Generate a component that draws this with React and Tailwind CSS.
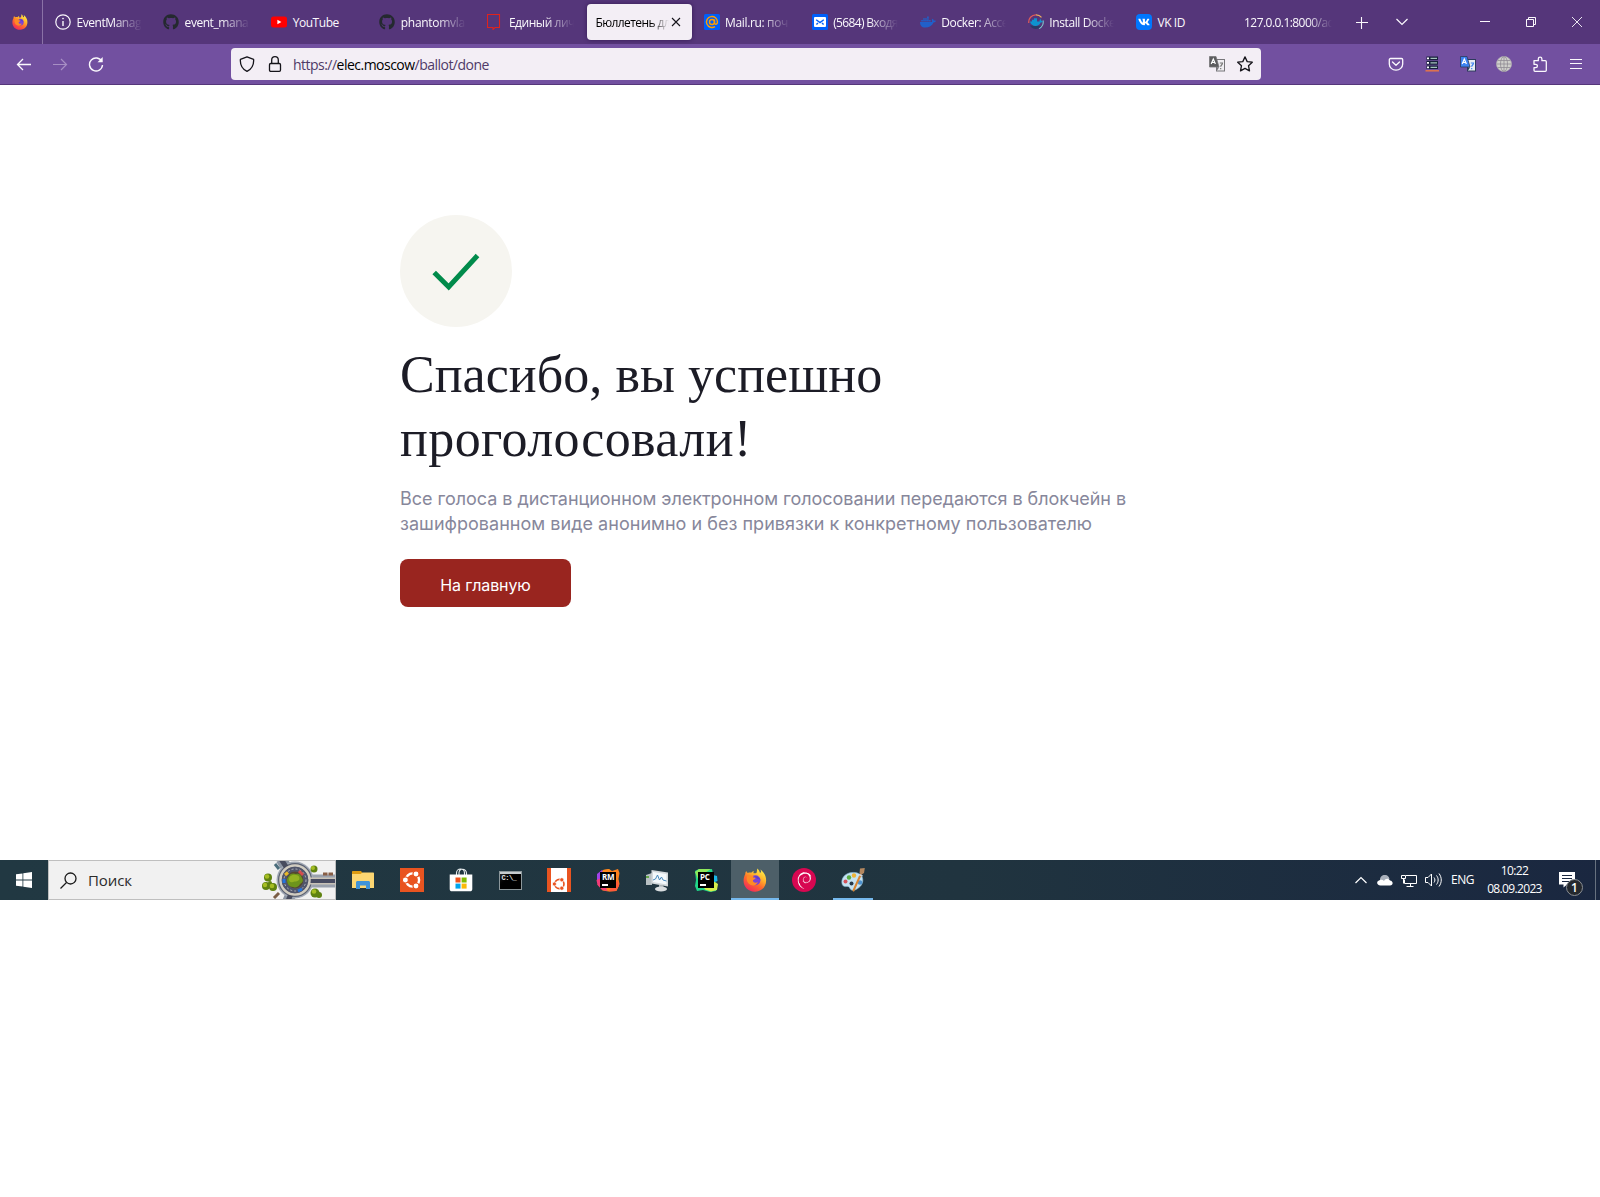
import React from "react";
import { FaGithub, FaDocker, FaVk } from "react-icons/fa";
import { SiDebian } from "react-icons/si";

function Firefox({ size, id }) {
  return (
    <svg width={size} height={size} viewBox="0 0 24 24">
      <defs>
        <linearGradient id={id} x1="0.85" y1="0.05" x2="0.25" y2="1">
          <stop offset="0" stopColor="#fff14a" />
          <stop offset="0.35" stopColor="#ffb02a" />
          <stop offset="0.6" stopColor="#ff6a2c" />
          <stop offset="1" stopColor="#f0245f" />
        </linearGradient>
      </defs>
      <path
        fill={`url(#${id})`}
        d="M14.5 0.5c1 1.2 2 2.4 2.4 4.2l1.2-0.4c0-1.2-.3-2-.7-2.8 2 1.300 4 4 5 6.500 2.600 8-2 15.500-10 15.700C5 24 .2 18.400.6 12c.1-2.600.9-4.300 1.600-5.700 0-1.200.3-2.300 1-3.300.4 1 1 1.600 1.700 2 1-.5 2.300-.6 3.300-.3 1-1 2-1.500 2.800-1.600-.5.8-.6 1.500-.4 2.200 1.500.2 2.700 0 3-.9.600-1.400.2-2.700.9-3.900z"
      />
      <circle cx="12.400" cy="12.200" r="5" fill="#7a42d8" />
      <path fill="#5a3fd0" d="M11 8.500c3-1 6 .6 6.600 4-.6-1-1.600-1.700-3-1.500z" />
      <path
        fill="#ff8a26"
        d="M4 8.500c1-1.500 3.500-1.700 5-.7.6-.4 1.600-.5 2.400-.2-.9.500-1.400 1.200-1.400 1.900l2.500.3c.1 1.200-1.300 1.700-2.300 2.200-.5.700-.2 1.500.4 2.100 1.300 1.100 3.400.6 4.400-.4-1 3.100-4.200 4.600-7.200 3.300C4.500 15.500 3 12 4 8.500z"
      />
    </svg>
  );
}

function InfoIcon() {
  return (
    <svg width="16" height="16" viewBox="0 0 16 16" fill="none" stroke="#fbf9fd">
      <circle cx="8" cy="8" r="7.200" strokeWidth="1.200" />
      <path d="M8 7v5" strokeWidth="1.400" />
      <circle cx="8" cy="4.600" r=".5" />
    </svg>
  );
}

function YouTubeIcon() {
  return (
    <svg width="16" height="16" viewBox="0 0 16 16">
      <rect y="2.500" width="16" height="11" rx="2.500" fill="#f00" />
      <path d="M6.400 5.700v4.600l4-2.300z" fill="#fff" />
    </svg>
  );
}

function BubbleIcon() {
  return (
    <svg width="16" height="16" viewBox="0 0 16 16" fill="none" stroke="#e0231c">
      <path d="M.5.500h12v13H8L6 15.500v-2H.5z" strokeWidth="1.100" />
    </svg>
  );
}

function MailAtIcon() {
  return (
    <svg width="16" height="16" viewBox="0 0 16 16" fill="none" stroke="#ff9e00" strokeWidth="1.400">
      <rect width="16" height="16" rx="1.500" fill="#005ff9" stroke="none" />
      <circle cx="8" cy="8" r="2.500" />
      <path d="M10.500 5.500v3.200c0 2.200 3 2 3-.7A5.500 5.500 0 1 0 11 12.600" />
    </svg>
  );
}

function EnvelopeIcon() {
  return (
    <svg width="16" height="16" viewBox="0 0 16 16">
      <rect width="16" height="16" rx="1.500" fill="#005ff9" />
      <rect x="2" y="3" width="12" height="10" rx="1" fill="#fff" />
      <path d="M4.200 5.800L8 8.600l3.800-2.800M4.400 10.600l1.600-1.600M11.600 10.600L10 9" fill="none" stroke="#005ff9" strokeWidth="1.400" />
    </svg>
  );
}

function DockerDocsIcon() {
  return (
    <svg width="16" height="16" viewBox="0 0 16 16" fill="none">
      <path d="M.8 9A7.200 7.200 0 0 1 8 .8" stroke="#e25b58" strokeWidth="1.200" />
      <path d="M8 .8a7 7 0 0 1 5.500 2.600" stroke="#f0b060" strokeWidth="1.200" />
      <path d="M15 6.500A7 7 0 0 1 11 14.500" stroke="#7fc5cc" strokeWidth="1.200" />
      <path d="M2 11.500c2 4.500 9 4.500 11 .5z" fill="#2b3a66" />
      <path d="M2 7.500h2v-1.700h2V4.200h3v3.300h2.500c0-1.200.3-2 .9-2.500.7.600 1 1.200 1 2 .6-.1 1 0 1.400.2-.4 1-1.300 1.300-2.200 1.300C11.500 13 3 13.500 2 7.500z" fill="#0e93cf" />
    </svg>
  );
}

function VkIcon() {
  return (
    <span className="flex size-4 items-center justify-center rounded-[4px] bg-[#0077ff] text-white">
      <FaVk size={12} />
    </span>
  );
}

const tabs = [
  { label: "EventManag", icon: <InfoIcon />, spacing: "tracking-[-0.45px]" },
  { label: "event_mana", icon: <FaGithub size={16} color="#24292f" />, spacing: "tracking-[-0.45px]" },
  { label: "YouTube", icon: <YouTubeIcon />, spacing: "tracking-[-0.45px]", full: true },
  { label: "phantomvla", icon: <FaGithub size={16} color="#24292f" />, spacing: "tracking-[-0.3px]" },
  { label: "Единый лич", icon: <BubbleIcon />, spacing: "tracking-[-0.45px]" },
  { label: "Бюллетень дл", active: true, spacing: "tracking-[-0.6px]" },
  { label: "Mail.ru: поч", icon: <MailAtIcon />, spacing: "tracking-[-0.35px]" },
  { label: "(5684) Входя", icon: <EnvelopeIcon />, spacing: "tracking-[-0.65px]" },
  { label: "Docker: Acce", icon: <FaDocker size={16} color="#2160c9" />, spacing: "tracking-[-0.4px]" },
  { label: "Install Docke", icon: <DockerDocsIcon />, spacing: "tracking-[-0.4px]" },
  { label: "VK ID", icon: <VkIcon />, spacing: "tracking-[-0.4px]", full: true },
  { label: "127.0.0.1:8000/ad", spacing: "tracking-[-0.55px]" },
];

function Tab({ tab }) {
  if (tab.active) {
    return (
      <div className="mr-[3.100px] flex h-9 w-[105px] shrink-0 items-center rounded bg-[#f3eef5] pl-2 text-black shadow-[0_0_4px_rgba(30,10,60,0.6)]">
        <span className={`w-[74px] pt-[2px] whitespace-nowrap [mask-image:linear-gradient(to_right,black_76%,transparent)] ${tab.spacing}`}>
          {tab.label}
        </span>
        <svg width="10" height="10" viewBox="0 0 10 10" className="ml-[2px]" stroke="#15141a" strokeWidth="1.100">
          <path d="M1 1l8 8M9 1L1 9" />
        </svg>
      </div>
    );
  }
  const fade = tab.full
    ? ""
    : tab.icon
      ? "w-[65px] [mask-image:linear-gradient(to_right,black_55%,transparent)]"
      : "w-[88px] [mask-image:linear-gradient(to_right,black_72%,transparent)]";
  return (
    <div className="flex h-9 w-[108.100px] shrink-0 items-center pl-2">
      {tab.icon && <span className="mr-[5.500px] size-4 shrink-0">{tab.icon}</span>}
      <span className={`pt-[2px] whitespace-nowrap ${fade} ${tab.spacing}`}>{tab.label}</span>
    </div>
  );
}

function TabBar() {
  return (
    <div className="flex h-11 items-center bg-[#55367a] text-[12px] text-[#fbf9fd]">
      <div className="flex h-full w-[43px] items-center border-r border-[#8a72a6] pl-3">
        <Firefox size={16} id="fxSmall" />
      </div>
      <div className="flex w-[1302px] pl-1">
        {tabs.map((tab) => (
          <Tab key={tab.label} tab={tab} />
        ))}
      </div>
      <div className="flex w-[117px] items-center pl-[11px]">
        <svg width="12" height="12" viewBox="0 0 12 12" stroke="currentColor" className="mt-px">
          <path d="M5.500 0v12M0 5.500h12" strokeWidth="1.100" />
        </svg>
        <svg width="12" height="8" viewBox="0 0 12 8" fill="none" stroke="currentColor" strokeWidth="1.200" className="ml-[28px]">
          <path d="M.5 1L6 6.500 11.500 1" />
        </svg>
      </div>
      <div className="grid grid-cols-3 [&>svg]:mx-[18px]">
        <svg width="10" height="10" viewBox="0 0 10 10" stroke="currentColor">
          <path d="M0 4.500h10" />
        </svg>
        <svg width="10" height="10" viewBox="0 0 10 10" fill="none" stroke="currentColor">
          <path d="M.5 2.500h7v7h-7zM2.500 2.500v-2h7v7h-2" />
        </svg>
        <svg width="10" height="10" viewBox="0 0 10 10" stroke="currentColor" strokeWidth=".9">
          <path d="M0 0l10 10M10 0L0 10" />
        </svg>
      </div>
    </div>
  );
}

function TranslateIcon({ back, front, ink, edge }) {
  return (
    <svg width="16" height="16" viewBox="0 0 16 16">
      <rect x="7.500" y="3.500" width="8" height="11.500" fill={front} stroke={edge} />
      <path d="M10.800 7h2.700c0 2-1.800 2-1.800 3.800M11.700 12v1.200" stroke={ink} fill="none" strokeWidth="1.200" />
      <path d="M.5.500h6.500l3 10.500H.5z" fill={back} stroke={edge} strokeWidth=".8" />
      <path d="M2.200 8L4.300 3 6.400 8M3 6.500h2.700" stroke="#fff" fill="none" strokeWidth="1.200" />
      <path d="M7 11.200h3l-1.500 3z" fill={edge} />
    </svg>
  );
}

function ToolBar() {
  return (
    <div className="flex h-[41px] items-start border-b border-[#55367a] bg-[#7250a0] pt-1 text-[#fbf9fd]">
      <div className="flex h-8 w-[231px] items-center gap-[21px] pl-4">
        <svg width="16" height="16" viewBox="0 0 16 16" fill="none" stroke="currentColor" strokeWidth="1.300">
          <path d="M15 8.500H1.500M7 3L1.500 8.500 7 14" />
        </svg>
        <svg width="16" height="16" viewBox="0 0 16 16" fill="none" stroke="#a78fc4" strokeWidth="1.200" className="ml-[-1px]">
          <path d="M1 8.500h13.500M9 3l5.500 5.500L9 14" />
        </svg>
        <svg width="16" height="16" viewBox="0 0 16 16" fill="none" stroke="currentColor" strokeWidth="1.400" className="ml-[-1px]">
          <path d="M13.800 5.500A6.500 6.500 0 1 0 14.500 9" />
          <path d="M14.700 1v5.300H9.500z" fill="currentColor" stroke="none" />
        </svg>
      </div>
      <div className="flex h-8 w-[1030px] items-center rounded bg-[#f3eef5] px-2 text-[14px] text-[#15141a]">
        <svg width="16" height="16" viewBox="0 0 16 16" fill="none" stroke="currentColor" strokeWidth="1.300" className="mr-3">
          <path d="M8 .8l6.600 2.500c.4 5-2 9.700-6.600 12.100C3.400 13 1 8.300 1.400 3.300z" strokeLinejoin="round" />
        </svg>
        <svg width="16" height="16" viewBox="0 0 16 16" fill="none" stroke="currentColor" strokeWidth="1.300">
          <rect x="2.500" y="7.500" width="11" height="7.800" rx="1.200" />
          <path d="M4.700 7.500V4a3.300 3.300 0 0 1 6.600 0v3.500" />
        </svg>
        <span className="ml-2.5 grow pt-px tracking-[-0.52px] text-[#4f3a68]">
          https://<span className="text-black">elec.moscow</span>/ballot/done
        </span>
        <TranslateIcon back="#5c5c5e" front="#f0eef2" ink="#777" edge="#77767a" />
        <svg width="16" height="16" viewBox="0 0 16 16" fill="none" stroke="currentColor" strokeWidth="1.300" strokeLinejoin="round" className="ml-3">
          <path d="M8 .9l2.200 4.700 5.100.6-3.800 3.500 1 5.200L8 12.400l-4.500 2.500 1-5.200L.7 6.200l5.100-.6z" />
        </svg>
      </div>
      <div className="ml-auto flex h-8 items-center gap-5 pr-4">
        <svg width="16" height="16" viewBox="0 0 16 16" fill="none" stroke="currentColor" strokeWidth="1.300">
          <path d="M2.500 2.500h11c.7 0 1.200.5 1.200 1.200V8a6.700 6.200 0 0 1-13.400 0V3.700c0-.7.500-1.200 1.200-1.200zM4.500 6L8 9.300 11.500 6" strokeLinejoin="round" strokeLinecap="round" />
        </svg>
        <svg width="16" height="16" viewBox="0 0 16 16">
          <path d="M2.500.500h11.500v3.700H2.500zM2.500 5h11.500v3.700H2.500zM2.500 9.500h11.500v3.600H2.500z" fill="#18203c" />
          <path d="M6.500 2.300h6.500M6.500 6.800h6.500M6.500 11.300h6.500" stroke="#a5c4bd" strokeWidth="1.200" />
          <path d="M3 2.300h2M3 6.800h2M3 11.300h2" stroke="#fff" strokeWidth="1.700" />
          <path d="M1.500 14.800h13.500" stroke="#e2734b" strokeWidth="1.500" />
        </svg>
        <TranslateIcon back="#3b82f0" front="#e8edf2" ink="#3b82f0" edge="#2c3a5c" />
        <svg width="16" height="16" viewBox="0 0 16 16" fill="none" stroke="#908c94" strokeWidth=".8">
          <circle cx="8" cy="8" r="7.500" fill="#d0d0cc" stroke="#b5b3b5" />
          <ellipse cx="8" cy="8" rx="3.500" ry="7.500" />
          <path d="M8 .5v15M.5 8h15M1.600 4.500h12.800M1.600 11.500h12.800" />
        </svg>
        <svg width="16" height="16" viewBox="0 0 16 16" fill="none" stroke="currentColor" strokeWidth="1.300" strokeLinejoin="round">
          <path d="M2 4.700h4.300V3a1.800 1.800 0 0 1 3.600 0v1.700h3.400c.6 0 1 .4 1 1v8.600c0 .6-.4 1-1 1H3c-.6 0-1-.4-1-1v-2.600h1.700a1.600 1.600 0 0 0 0-3.400H2z" />
        </svg>
        <svg width="16" height="16" viewBox="0 0 16 16" stroke="currentColor" strokeWidth="1.200">
          <path d="M2 3.500h12M2 7.500h12M2 12.500h12" />
        </svg>
      </div>
    </div>
  );
}

function Page() {
  return (
    <main className="h-[775px] pl-[400px] pt-[130px]">
      <div className="flex size-28 items-center justify-center rounded-full bg-[#f6f5f0]">
        <svg width="48" height="40" viewBox="0 0 48 40" fill="none" stroke="#018b4b" strokeWidth="5" className="mt-[2px]">
          <path d="M2.200 20.500L16.700 35 45.500 3.500" />
        </svg>
      </div>
      <h1 className="mt-[16px] w-[700px] font-['Liberation_Serif',serif] text-[52px] leading-[64px] text-[#1c1c26]">
        <span className="block tracking-[0.05px]">Спасибо, вы успешно</span>
        <span className="block tracking-[0.4px]">проголосовали!</span>
      </h1>
      <p className="mt-[15px] whitespace-nowrap font-['Inter',sans-serif] text-[18px] leading-[25px] text-[#87879b]">
        <span className="block tracking-[-0.045px]">Все голоса в дистанционном электронном голосовании передаются в блокчейн в</span>
        <span className="block tracking-[0.025px]">зашифрованном виде анонимно и без привязки к конкретному пользователю</span>
      </p>
      <button className="mt-[23px] flex h-12 w-[171px] items-center justify-center rounded-lg bg-[#99251f] pt-1 font-['Inter',sans-serif] text-[16px] tracking-[-0.1px] text-white">
        На главную
      </button>
    </main>
  );
}

function Roundabout() {
  return (
    <svg width="74" height="38" viewBox="0 0 74 38" fill="none">
      <path d="M20-2l9 14M27 40l5-12" stroke="#8c95a3" strokeWidth="11" />
      <path d="M42 20h34" stroke="#9aa1ad" strokeWidth="13" />
      <circle cx="34" cy="19" r="18.500" fill="#a2a9b5" />
      <circle cx="34" cy="19" r="17" fill="#5b6273" />
      <path d="M20-2l9 14M27 40l5-12" stroke="#484c5e" strokeWidth="5" />
      <path d="M46 20h30" stroke="#c8c2b7" strokeWidth="7" />
      <path d="M46 20h30" stroke="#474b61" strokeWidth="4" />
      <circle cx="34" cy="19" r="14.500" stroke="#d1ccc0" strokeWidth="2.500" />
      <circle cx="34" cy="19" r="11" stroke="#50556b" strokeWidth="4.500" />
      <circle cx="34" cy="19" r="11" stroke="#d8d8d8" strokeWidth=".7" strokeDasharray="2 2" />
      <circle cx="34" cy="19" r="8.500" fill="#544633" />
      <path d="M26 19c0-2 1-3 2-4 1-3 5-3 7-2 4-1 5 2 6 4 2 3 0 5-2 6-1 3-5 4-7 3-4 0-6-3-6-7z" fill="#6d941c" />
      <path d="M28 18c0-3 4-5 7-4 3 0 4 3 3 5-2 2-4 1-6 2-3 1-4-1-4-3z" fill="#94b322" />
      <path d="M24 14l3-2.500" stroke="#e9b927" strokeWidth="3" />
      <path d="M38 10l4 4" stroke="#d34b4c" strokeWidth="3" />
      <path d="M23 18v4M37 30l4-2" stroke="#2474df" strokeWidth="3" />
      <g fill="#5f8210">
        <circle cx="7" cy="16.500" r="4" />
        <circle cx="5" cy="25" r="4" />
        <circle cx="12" cy="26" r="4" />
        <circle cx="9" cy="22" r="2" />
        <circle cx="53" cy="8" r="3.500" />
        <circle cx="54" cy="32" r="4.500" />
        <circle cx="58" cy="34" r="3" />
      </g>
      <g fill="#a5bd22">
        <circle cx="6" cy="15.500" r="2.300" />
        <circle cx="4" cy="24" r="2.200" />
        <circle cx="11" cy="25" r="2.300" />
        <circle cx="52" cy="7" r="2" />
        <circle cx="53" cy="30.500" r="2.300" />
      </g>
      <path d="M14 3l4 5" stroke="#4b6d7c" strokeWidth="3" />
      <path d="M13 37l5-5" stroke="#7b5e46" strokeWidth="3" />
      <path d="M62 13h4.500M67.500 13h4.500" stroke="#885e45" strokeWidth="3" />
    </svg>
  );
}

function UbuntuMark({ color, ground, size }) {
  return (
    <svg width={size} height={size} viewBox="0 0 20 20" fill="none">
      <circle cx="10.500" cy="10" r="6.600" stroke={color} strokeWidth="2.400" />
      <g fill={color} stroke={ground} strokeWidth="1.100">
        <circle cx="3.400" cy="10" r="3" />
        <circle cx="14" cy="4" r="3" />
        <circle cx="14" cy="16" r="3" />
      </g>
    </svg>
  );
}

function ExplorerIcon() {
  return (
    <svg width="24" height="24" viewBox="0 0 24 24">
      <path d="M1 4c0-.6.4-1 1-1h8l1.500 2H22v5H1z" fill="#dd9b12" />
      <path d="M1 6h8.500l2-1.500H22c.6 0 1 .4 1 1V20H1z" fill="#fcd672" />
      <path d="M5 21v-6.500c0-.9.600-1.500 1.500-1.500h11c.9 0 1.500.6 1.500 1.500V21h-4v-3.500H9V21z" fill="#3f93d8" />
    </svg>
  );
}

function StoreIcon() {
  return (
    <svg width="24" height="24" viewBox="0 0 24 24">
      <path d="M7.500 7V5a4 4 0 0 1 8 0v2M10 7V4.500a4 4 0 0 1 2-3.300M13.500 1.200a4 4 0 0 1 4 4V7" fill="none" stroke="#e9eef0" strokeWidth="1.100" />
      <path d="M.7 6.500h22.600V21c0 1.500-.8 2.300-2.300 2.300H3c-1.500 0-2.300-.8-2.300-2.300z" fill="#fff" />
      <path d="M6.500 9.500h5v5h-5z" fill="#f1511b" />
      <path d="M12.600 9.500h5v5h-5z" fill="#80bb01" />
      <path d="M6.500 15.600h5v5h-5z" fill="#00a5ee" />
      <path d="M12.600 15.600h5v5h-5z" fill="#fbb909" />
    </svg>
  );
}

function TerminalIcon() {
  return (
    <span className="flex h-[19px] w-[23px] flex-col border border-[#8c979b] bg-linear-to-br from-[#333] via-black to-black">
      <span className="h-[2px] shrink-0 bg-[#c7cdd0]" />
      <span className="pl-[2px] font-['Liberation_Mono',monospace] text-[7px] leading-[9px] font-bold tracking-[-0.5px] text-[#e5e5e5]">C:\_</span>
    </span>
  );
}

function JetBrainsIcon({ name, children }) {
  return (
    <span className="grid place-items-center [&>*]:col-start-1 [&>*]:row-start-1">
      <svg width="24" height="24" viewBox="0 0 24 24">
        {children}
      </svg>
      <span className="flex size-[16px] flex-col bg-black pl-[2px] font-['Open_Sans',sans-serif] text-[8px] leading-[10px] font-bold tracking-[-0.3px] text-white">
        {name}
        <span className="mt-[2px] h-[1.500px] w-[6px] bg-white" />
      </span>
    </span>
  );
}

function RubyMineIcon() {
  return (
    <JetBrainsIcon name="RM">
      <path d="M7 2l6-1 3 2 6-2 1.500 4-1 6 1 5-3 7-8 .5-6-1-5-6z" fill="#fc801d" />
      <path d="M1 6l5-4 3 3-1 7-7 3z" fill="#a342e8" />
      <path d="M.5 12l5-2 6 13-5-1-5-5z" fill="#f43a78" />
      <path d="M14 21l8-9 1 6-3 5-7 .5z" fill="#ff5a3a" />
      <path d="M7 2l6-1 2 3-6 4-3-4z" fill="#ff8a1d" />
    </JetBrainsIcon>
  );
}

function PyCharmIcon() {
  return (
    <JetBrainsIcon name="PC">
      <path d="M1 3l4-2 5 1 8-1 1 5-1 7 5 2-1 8-6 1-7-2-6 1-2-5 1-6z" fill="#21d789" />
      <path d="M19 7l4 1 .5 5-5 2z" fill="#18b7e8" />
      <path d="M9 18l10-5 5 3-1 6-6 1.500-6-2z" fill="#d7ef4b" />
      <path d="M1 4l4-3 12 0-8 5-5 5z" fill="#8fe85c" />
    </JetBrainsIcon>
  );
}

function MonitorIcon() {
  return (
    <svg width="24" height="24" viewBox="0 0 24 24">
      <path d="M1 7l6-2v12H1z" fill="#b7bfc2" />
      <path d="M1 8h3v2H1z" fill="#62a448" />
      <path d="M6.500 2L23 4.500v14L6.500 15.500z" fill="#d3d8db" />
      <path d="M8 4l13.500 2v10.500L8 14z" fill="#f4f9fc" />
      <path d="M8 12l2.500-1 2-4 2 5 2-3 1.500 3 3.500 1" stroke="#4789bd" fill="none" />
      <path d="M14 17h4l1 3h-5z" fill="#aeb5b9" />
      <ellipse cx="16" cy="21" rx="6" ry="2.500" fill="#d9dddf" />
    </svg>
  );
}

function PaintIcon() {
  return (
    <svg width="24" height="24" viewBox="0 0 24 24">
      <path d="M11 4.500C5 5 .8 9 .8 14c0 3.500 2.200 5 4.500 4.500 2-.4 3 .2 3.700 2 1 2.300 4 2.300 7 .5 5-3 6.500-7 5.500-11S16 4 11 4.500z" fill="#c5e2f2" stroke="#86b8d4" strokeWidth=".6" />
      <circle cx="10.500" cy="15.500" r="2" fill="#26394a" />
      <circle cx="4.500" cy="13.500" r="2" fill="#d4535b" />
      <circle cx="8" cy="9.500" r="2.200" fill="#59ad42" />
      <circle cx="13" cy="7.500" r="2.200" fill="#edb338" />
      <circle cx="19" cy="14.500" r="2.300" fill="#4d91ce" />
      <path d="M19.500 7l-7 15.500" stroke="#d98531" strokeWidth="2" strokeLinecap="round" />
      <path d="M18.500 5l.5-4.500L23.800 0l-.8 5-3 2z" fill="#b3875f" />
      <path d="M18 6.500l3.500 1.500" stroke="#d2d2d2" strokeWidth="1.500" />
    </svg>
  );
}

const apps = [
  { name: "explorer", icon: <ExplorerIcon /> },
  {
    name: "ubuntu",
    icon: (
      <span className="flex size-6 items-center justify-center bg-[#e95420]">
        <UbuntuMark color="#fff" ground="#e95420" size={20} />
      </span>
    ),
  },
  { name: "store", icon: <StoreIcon /> },
  { name: "terminal", icon: <TerminalIcon /> },
  {
    name: "ubuntu-lts",
    icon: (
      <span className="flex size-6 items-end justify-center border-x-4 border-[#e95420] bg-white pb-[1px]">
        <UbuntuMark color="#e95420" ground="#fff" size={14} />
      </span>
    ),
  },
  { name: "rubymine", icon: <RubyMineIcon /> },
  { name: "monitor", icon: <MonitorIcon /> },
  { name: "pycharm", icon: <PyCharmIcon /> },
  { name: "firefox", icon: <Firefox size={24} id="fxLarge" />, cell: "bg-[#4d5f68]", bar: "w-12 bg-[#76b9ed]" },
  {
    name: "debian",
    icon: (
      <span className="flex size-6 items-center justify-center rounded-full bg-[#d70751] text-white">
        <SiDebian size={17} />
      </span>
    ),
  },
  { name: "paint", icon: <PaintIcon />, bar: "w-10 bg-[#76b9ed]" },
];

function TaskBar() {
  return (
    <div className="flex h-10 items-stretch bg-linear-to-r from-[#213842] via-[#20343f] via-60% to-[#1a2740] text-white">
      <div className="flex w-12 items-center justify-center">
        <svg width="16" height="16" viewBox="0 0 16 16" fill="#fff">
          <path d="M0 2.300L6.500 1.400V7.500H0zM7.300 1.300L16 0v7.500H7.300zM0 8.400h6.500v6.200L0 13.700zM7.300 8.400H16V16l-8.700-1.300z" />
        </svg>
      </div>
      <div className="mr-[3px] flex w-[288px] items-center overflow-hidden border border-[#bfbfbf] bg-[#f1f1f1] pl-[11px] text-[15px] text-[#2b2b2b]">
        <svg width="17" height="17" viewBox="0 0 17 17" fill="none" stroke="#1a1a1a" strokeWidth="1.300">
          <circle cx="10.500" cy="6.500" r="5.500" />
          <path d="M6.500 10.500L.5 16.500" />
        </svg>
        <span className="ml-[11px] grow tracking-[-0.1px]">Поиск</span>
        <Roundabout />
      </div>
      {apps.map((app) => (
        <div key={app.name} className={`mr-px flex w-12 flex-col items-center ${app.cell || ""}`}>
          <span className="flex h-[38px] items-center pt-[2px]">{app.icon}</span>
          {app.bar && <span className={`h-[2px] shrink-0 ${app.bar}`} />}
        </div>
      ))}
      <div className="ml-auto flex w-[123px] items-center text-[12px]">
        <svg width="12" height="8" viewBox="0 0 12 8" fill="none" stroke="#fff" strokeWidth="1.200">
          <path d="M.5 7L6 1.500 11.500 7" />
        </svg>
        <svg width="16" height="12" viewBox="0 0 16 12" className="ml-[10px]">
          <path d="M3 6C3 2 6 .500 8.500 1c2 .2 3.500 1.500 4 4l-8 4z" fill="#a9b0bb" />
          <path d="M3.500 11.500C-.5 11.500-1 7 2.500 6.200 4 5.500 6 6 7 7c1.500-2.500 4.500-3 6-.5 3.500.3 3.500 5 0 5z" fill="#fff" />
        </svg>
        <svg width="16" height="14" viewBox="0 0 16 14" className="mt-px ml-[8px]" fill="none" stroke="#fff">
          <path d="M5 1.500h10.500v8H3.500v-4M.5 1.500h4v3h-4zM2.500 4.500v5M9.500 9.500v3M5.500 12.500h7" />
        </svg>
        <svg width="17" height="14" viewBox="0 0 17 14" className="ml-[8px]" fill="none" stroke="#fff">
          <path d="M.5 4.500h2.500L6.500 1v12L3 9.500H.5zM9 4.500c1.200 1.500 1.200 3.500 0 5M11.500 2.500c2.200 2.700 2.200 6.300 0 9M14 .5c3 4 3 9 0 13" />
        </svg>
        <span className="ml-[9px] tracking-[-0.45px]">ENG</span>
      </div>
      <div className="flex w-[73px] flex-col items-center justify-center text-[12px] leading-[18px] tracking-[-0.65px]">
        <span>10:22</span>
        <span>08.09.2023</span>
      </div>
      <div className="relative flex w-[44px] items-center pl-[8px]">
        <svg width="16" height="16" viewBox="0 0 16 16">
          <path d="M0 0h16v12.500H8l-3.500 3v-3H0z" fill="#fff" />
          <path d="M3 3.500h10M3 6.500h10M3 9.500h7" stroke="#1a2740" />
        </svg>
        <span className="absolute top-[19px] left-[15px] flex size-[17px] items-center justify-center rounded-full border border-[#8b8f94] bg-[#24282d] text-[12px] leading-none font-semibold">1</span>
      </div>
      <div className="w-[5px] border-l border-[#67717f]" />
    </div>
  );
}

export default function App() {
  return (
    <div className="h-[1197px] w-[1600px] overflow-hidden bg-white font-['Open_Sans','Noto_Sans',sans-serif]">
      <TabBar />
      <ToolBar />
      <Page />
      <TaskBar />
    </div>
  );
}
